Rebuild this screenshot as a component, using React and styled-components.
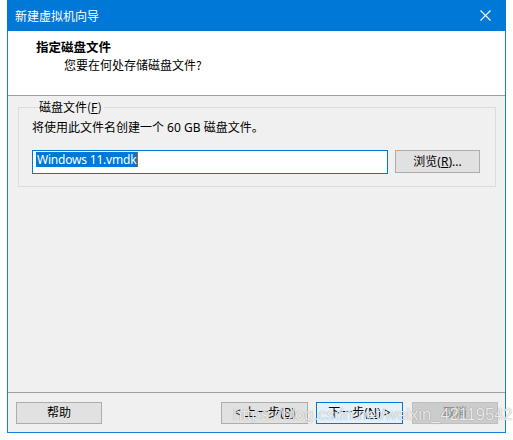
import React from "react";
import styled, { createGlobalStyle } from "styled-components";

const GlobalStyle = createGlobalStyle`
  html, body {
    margin: 0;
    padding: 0;
    background: #ffffff;
  }
  body {
    font-family: "Noto Sans", "Noto Sans CJK SC", sans-serif;
    font-size: 12px;
    color: #000;
  }
`;

const Page = styled.div`
  width: 513px;
  height: 440px;
  padding-left: 7px;
  box-sizing: border-box;
`;

const Window = styled.div`
  width: 499px;
  height: 433px;
  box-sizing: border-box;
  border: 1px solid #1a7fd4;
  border-top: none;
  display: flex;
  flex-direction: column;
  position: relative;
  background: #f0f0f0;
`;

const TitleBar = styled.div`
  height: 31px;
  flex: none;
  background: #0078d7;
  color: #ffffff;
  display: flex;
  align-items: center;
  justify-content: space-between;
  padding: 0 9px 0 8px;
  margin: 0 -1px;
  font-size: 12px;
  font-family: "Noto Sans CJK SC", sans-serif;
`;

const CloseIcon = styled.svg`
  width: 11px;
  height: 11px;
  margin-right: 6px;
`;

const Header = styled.div`
  height: 56px;
  flex: none;
  background: #ffffff;
  border-bottom: 1px solid #a0a0a0;
  padding: 8px 0 0 28px;
  box-sizing: content-box;
  font-family: "Noto Sans CJK SC", sans-serif;
`;

const HeaderTitle = styled.div`
  font-weight: bold;
  font-size: 12.5px;
  line-height: 16px;
`;

const HeaderSub = styled.div`
  margin: 2px 0 0 28px;
  line-height: 16px;
`;

const Body = styled.div`
  flex: 1;
  padding: 3px 9px 0 10px;
`;

const Group = styled.fieldset`
  margin: 0;
  border: 1px solid #dcdcdc;
  padding: 5px 12px 12px 13px;
  min-width: 0;
`;

const Legend = styled.legend`
  padding: 0 2px 0 1px;
  margin-left: 6px;
  line-height: 16px;
  font-family: "Noto Sans CJK SC", sans-serif;
`;

const Hint = styled.div`
  line-height: 16px;
  font-family: "Noto Sans", "Noto Sans CJK SC", sans-serif;
`;

const FileRow = styled.div`
  display: flex;
  align-items: flex-start;
  gap: 7px;
  margin-top: 14px;
`;

const PathBox = styled.div`
  width: 356px;
  height: 24px;
  box-sizing: border-box;
  background: #ffffff;
  border: 1px solid #0078d7;
  padding: 1px 0 0 3px;
  display: flex;
  align-items: flex-start;
`;

const Selected = styled.span`
  background: #0078d7;
  color: #ffffff;
  font-size: 12px;
  letter-spacing: -0.2px;
  line-height: 15px;
  padding: 0 1px;
  border-right: 1px solid #c06000;
`;

const Button = styled.button`
  width: ${({ $w }) => $w || 86}px;
  height: ${({ $h }) => $h || 22}px;
  box-sizing: border-box;
  border: 1px solid
    ${({ $variant }) =>
      $variant === "default" ? "#0078d7" : $variant === "disabled" ? "#bfbfbf" : "#adadad"};
  background: ${({ $variant }) =>
    $variant === "default" ? "#e5f1fb" : $variant === "disabled" ? "#cccccc" : "#e1e1e1"};
  color: ${({ $variant }) => ($variant === "disabled" ? "#8a8a8a" : "#000000")};
  font-family: "Noto Sans", "Noto Sans CJK SC", sans-serif;
  font-size: 12px;
  line-height: 16px;
  padding: 0;
  display: flex;
  align-items: center;
  justify-content: center;
`;

const Key = styled.span`
  text-decoration: underline;
`;

const Footer = styled.div`
  flex: none;
  border-top: 1px solid #a0a0a0;
  display: flex;
  align-items: flex-start;
  padding: 9px 7px 0 8px;
  box-sizing: border-box;
  height: 40px;
`;

const Spacer = styled.div`
  flex: 1;
`;

const NavGroup = styled.div`
  display: flex;
  gap: 8px;
  & > :last-child {
    margin-left: 1px;
  }
`;

const Watermark = styled.div`
  position: absolute;
  left: 225px;
  top: 405px;
  font-family: "Liberation Sans", Arial, sans-serif;
  font-size: 16.5px;
  color: rgba(255, 255, 255, 0.85);
  text-shadow: 0 0 1px rgba(0, 0, 0, 0.45);
  pointer-events: none;
  white-space: nowrap;
`;

export default function App() {
  return (
    <>
      <GlobalStyle />
      <Page>
        <Window>
          <TitleBar>
            <span>新建虚拟机向导</span>
            <CloseIcon viewBox="0 0 11 11">
              <path d="M0.5 0.5 L10.5 10.5 M10.5 0.5 L0.5 10.5" stroke="#fff" strokeWidth="1.1" />
            </CloseIcon>
          </TitleBar>
          <Header>
            <HeaderTitle>指定磁盘文件</HeaderTitle>
            <HeaderSub>您要在何处存储磁盘文件?</HeaderSub>
          </Header>
          <Body>
            <Group>
              <Legend>
                磁盘文件(<Key>F</Key>)
              </Legend>
              <Hint>将使用此文件名创建一个 60 GB 磁盘文件。</Hint>
              <FileRow>
                <PathBox>
                  <Selected>Windows 11.vmdk</Selected>
                </PathBox>
                <Button $w={85} $h={23}>
                  浏览(<Key>R</Key>)...
                </Button>
              </FileRow>
            </Group>
          </Body>
          <Footer>
            <Button>帮助</Button>
            <Spacer />
            <NavGroup>
              <Button $w={87}>
                &lt; 上一步(<Key>B</Key>)
              </Button>
              <Button $w={87} $variant="default">
                下一步(<Key>N</Key>) &gt;
              </Button>
              <Button $variant="disabled">取消</Button>
            </NavGroup>
          </Footer>
          <Watermark>https://blog.csdn.net/weixin_42119542</Watermark>
        </Window>
      </Page>
    </>
  );
}
